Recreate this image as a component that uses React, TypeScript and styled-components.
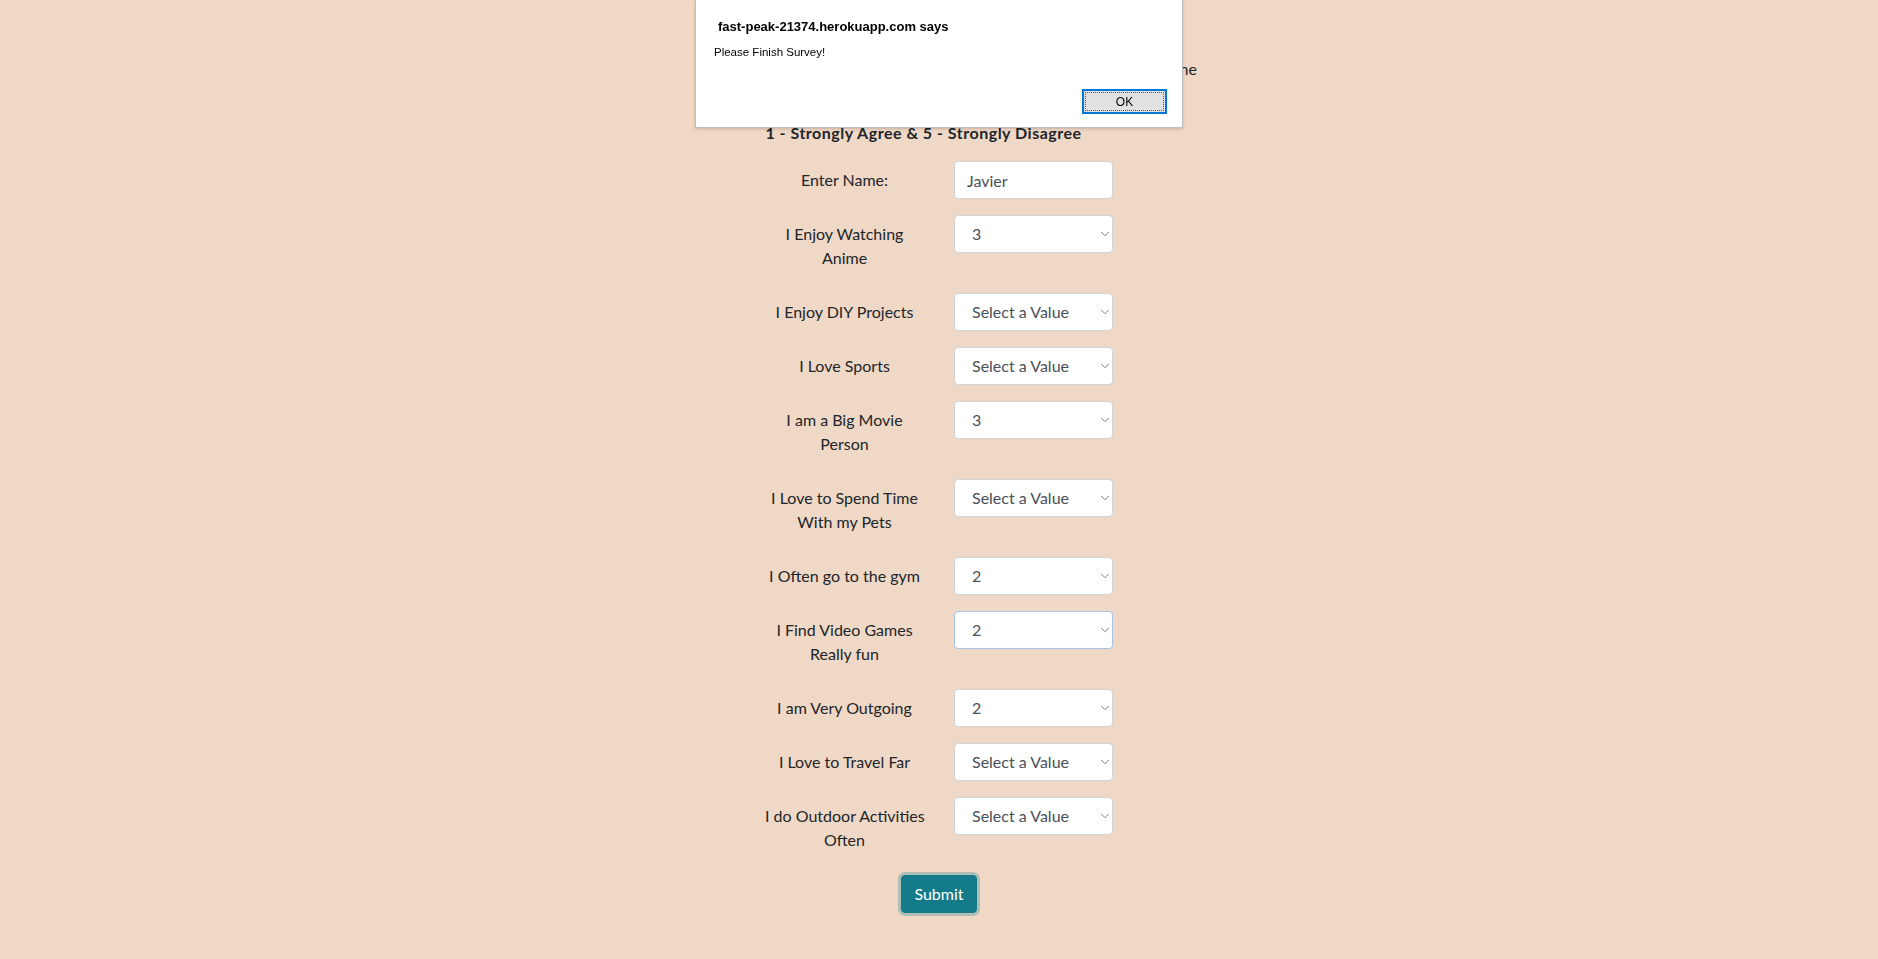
import React from "react";
import styled, { createGlobalStyle } from "styled-components";
import { ChevronDown } from "lucide-react";

const GlobalStyle = createGlobalStyle`
  html, body {
    margin: 0;
    padding: 0;
    background: #f0d8c6;
  }
  body {
    font-family: Lato, "Noto Sans", "Liberation Sans", sans-serif;
    font-size: 16px;
    line-height: 1.5;
    color: #212529;
  }
  * { box-sizing: border-box; }
`;

const Page = styled.main`
  min-height: 100vh;
  padding-top: 57px;
  padding-bottom: 40px;
  background: #f0d8c6;
`;

const Intro = styled.p`
  width: 497px;
  margin: 0 0 40px 700px;
  text-align: right;
  white-space: nowrap;
  overflow: hidden;
  line-height: 24px;
`;

const Heading = styled.h5`
  margin: 0 0 16px;
  padding-right: 31px;
  text-align: center;
  font-size: 16px;
  font-weight: 700;
  letter-spacing: 0.5px;
  line-height: 24px;
`;

const Form = styled.form`
  width: 378px;
  margin: 0 auto;
`;

const Row = styled.div`
  display: grid;
  grid-template-columns: 189px 189px;
  margin-bottom: 16px;
`;

const Label = styled.label`
  padding: 7px 15px;
  text-align: center;
  line-height: 24px;
  white-space: nowrap;
  color: #212529;
`;

const Line = styled.span`
  display: block;
`;

const Cell = styled.div`
  position: relative;
  padding: 0 15px;
`;

const Input = styled.input`
  display: block;
  width: 100%;
  height: 38px;
  padding: 6px 12px;
  font: inherit;
  line-height: 1.5;
  color: #495057;
  background: #fff;
  border: 1px solid #ced4da;
  border-radius: 4px;
  outline: none;
`;

const Select = styled.select<{ $focused?: boolean }>`
  display: block;
  width: 100%;
  height: 38px;
  padding: 6px 24px 6px 17px;
  font: inherit;
  line-height: 1.5;
  color: #495057;
  background: #fff;
  border: 1px solid ${(p) => (p.$focused ? "#a7c4e6" : "#ced4da")};
  border-radius: 4px;
  outline: none;
  appearance: none;
  -webkit-appearance: none;
`;

const Arrow = styled(ChevronDown)`
  position: absolute;
  right: 16px;
  top: 12px;
  color: #767676;
  pointer-events: none;
`;

const SubmitButton = styled.button`
  display: block;
  margin: 0 auto;
  height: 38px;
  padding: 6px 12px;
  font: inherit;
  line-height: 1.5;
  color: #fff;
  background: #137a8a;
  border: 1px solid #137a8a;
  border-radius: 4px;
  box-shadow: 0 0 0 3px rgba(120, 170, 168, 0.55);
  cursor: pointer;
`;

const Dialog = styled.div`
  position: fixed;
  top: -1px;
  left: 695px;
  width: 488px;
  height: 129px;
  background: #fff;
  border: 1px solid #bdbdbd;
  box-shadow: 0 1px 3px rgba(0, 0, 0, 0.18);
  padding: 18px 15px 0 18px;
  font-family: "Liberation Sans", Arial, sans-serif;
  color: #000;
`;

const DialogTitle = styled.div`
  padding-left: 4px;
  font-size: 13px;
  font-weight: 700;
  line-height: 17px;
`;

const DialogMessage = styled.div`
  margin-top: 10px;
  font-size: 11.5px;
  line-height: 15px;
`;

const DialogActions = styled.div`
  display: flex;
  justify-content: flex-end;
  margin-top: 29px;
`;

const OkButton = styled.button`
  width: 85px;
  height: 25px;
  padding: 0;
  font-family: "Liberation Sans", Arial, sans-serif;
  font-size: 12px;
  color: #000;
  background: #e1e1e1;
  border: 2px solid #0078d7;
  outline: 1px dotted #555;
  outline-offset: -4px;
`;

type Question = {
  lines: string[];
  value: string;
  focused?: boolean;
};

const questions: Question[] = [
  { lines: ["I Enjoy Watching", "Anime"], value: "3" },
  { lines: ["I Enjoy DIY Projects"], value: "" },
  { lines: ["I Love Sports"], value: "" },
  { lines: ["I am a Big Movie", "Person"], value: "3" },
  { lines: ["I Love to Spend Time", "With my Pets"], value: "" },
  { lines: ["I Often go to the gym"], value: "2" },
  { lines: ["I Find Video Games", "Really fun"], value: "2", focused: true },
  { lines: ["I am Very Outgoing"], value: "2" },
  { lines: ["I Love to Travel Far"], value: "" },
  { lines: ["I do Outdoor Activities", "Often"], value: "" },
];

export default function App() {
  return (
    <>
      <GlobalStyle />
      <Page>
        <Intro>Fill out the survey below to be matched with a friend online</Intro>
        <Heading>1 - Strongly Agree &amp; 5 - Strongly Disagree</Heading>
        <Form onSubmit={(e) => e.preventDefault()}>
          <Row>
            <Label htmlFor="name">
              <Line>Enter Name:</Line>
            </Label>
            <Cell>
              <Input id="name" type="text" defaultValue="Javier" />
            </Cell>
          </Row>
          {questions.map((q, i) => (
            <Row key={i}>
              <Label htmlFor={`q${i}`}>
                {q.lines.map((l) => (
                  <Line key={l}>{l}</Line>
                ))}
              </Label>
              <Cell>
                <Select id={`q${i}`} defaultValue={q.value} $focused={q.focused}>
                  <option value="">Select a Value</option>
                  <option value="1">1</option>
                  <option value="2">2</option>
                  <option value="3">3</option>
                  <option value="4">4</option>
                  <option value="5">5</option>
                </Select>
                <Arrow size={14} strokeWidth={1.6} />
              </Cell>
            </Row>
          ))}
          <SubmitButton type="submit">Submit</SubmitButton>
        </Form>
      </Page>
      <Dialog role="alertdialog">
        <DialogTitle>fast-peak-21374.herokuapp.com says</DialogTitle>
        <DialogMessage>Please Finish Survey!</DialogMessage>
        <DialogActions>
          <OkButton type="button">OK</OkButton>
        </DialogActions>
      </Dialog>
    </>
  );
}
